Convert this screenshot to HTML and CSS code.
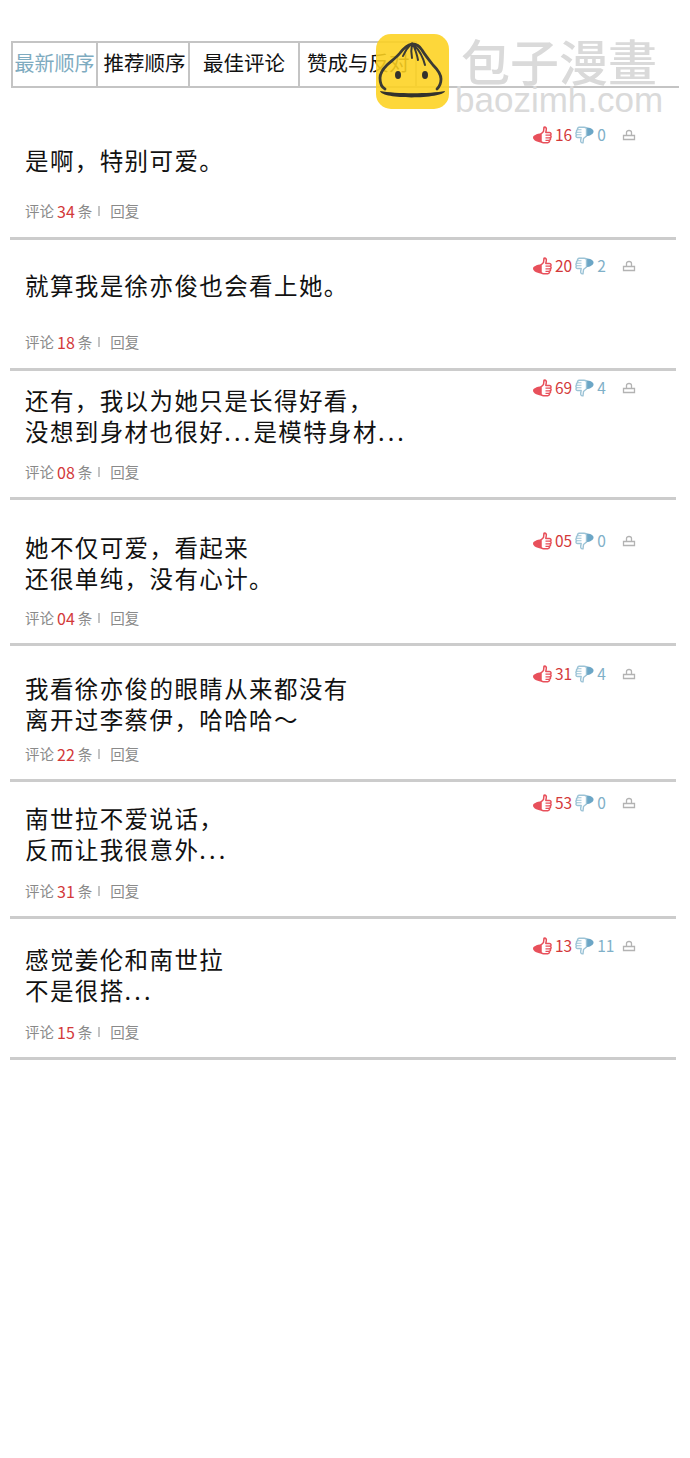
FILE: index.html
```html
<!DOCTYPE html>
<html lang="zh">
<head>
<meta charset="utf-8">
<title>评论</title>
<link rel="stylesheet" href="styles.css">
</head>
<body>
<svg class="defs" width="0" height="0" aria-hidden="true">
  <symbol id="up" viewBox="0 0 20 18">
    <path d="M0 11.500C0 9.500 3 8 9 7V16.500C4 16.500 0 14 0 11.500Z" fill="#e8505b"/>
    <path d="M8 8 10.500 5.500 11 1.200c1.800-.4 2.800 1 2.200 3L12.800 6.500h3.700c1.800 0 2 2.200.8 2.700 1.200.7 1 2.300-.1 2.600.8.900.3 2.300-.8 2.500.4 1.100-.3 2.400-1.600 2.400H10.500C9 16.700 8 16 8 15Z" fill="#fff" stroke="#e8505b" stroke-width="1.500" stroke-linejoin="round"/>
    <path d="M12.500 9.200h4.500M12.500 11.800h4.500M12.500 14.300h3.500" fill="none" stroke="#e8505b" stroke-width="1.300"/>
  </symbol>
  <symbol id="down" viewBox="0 0 20 18">
    <path d="M19.500 5.500C19.500 8 16.500 9.500 12 10.500V1.500C16 1.500 19.500 3 19.500 5.500Z" fill="#6ca6c6"/>
    <path d="M12.500 10 9.500 12.500 9 16.800c-1.800.4-2.800-1-2.200-3L7.200 11.500H3.500c-1.800 0-2-2.200-.8-2.700-1.200-.7-1-2.300.1-2.600-.8-.9-.3-2.300.8-2.500-.4-1.100.3-2.400 1.600-2.400H10c1.500 0 2.500.7 2.500 1.700Z" fill="#fff" stroke="#9cc3d6" stroke-width="1.400" stroke-linejoin="round"/>
    <path d="M7.500 8.800H3M7.500 6.200H3M7.500 3.700H4" fill="none" stroke="#9cc3d6" stroke-width="1.100"/>
  </symbol>
  <symbol id="report" viewBox="0 0 14 12">
    <path d="M4.500 6V3.500C4.500 2 5.500 1.500 7 1.500S9.500 2 9.500 3.500V6M1.500 6.500H12.500V10.500H1.500Z" fill="none" stroke="#b3b3b3" stroke-width="1.300"/>
  </symbol>
</svg>

<nav class="tabs">
  <a class="tab tab-new">最新顺序</a>
  <a class="tab tab-rec">推荐顺序</a>
  <a class="tab tab-best">最佳评论</a>
  <a class="tab tab-vote">赞成与反对</a>
</nav>

<div class="brand">
  <svg class="logo" viewBox="0 0 73 75" aria-hidden="true">
    <rect width="73" height="75" rx="15" fill="#fdd21f" fill-opacity=".88"/>
    <path d="M36 10C31 11 27 15 24 19 20 24 15 27 11 31 7 35 4 40 4 44 4 49 5 53 9 55" fill="none" stroke="#3b3a34" stroke-width="2.800" stroke-linecap="round"/>
    <path d="M36 10C41 10 43 12 46 16 49 21 53 26 57 31 62 36 65 40 65 45 65 49 64 52 61 55" fill="none" stroke="#3b3a34" stroke-width="2.800" stroke-linecap="round"/>
    <path d="M35 10C32 13 29 17 27 22M36 10C35 15 35 19 36 24M37 10C39 15 41 20 42 26M38 11C43 16 47 23 49 31" fill="none" stroke="#3b3a34" stroke-width="2" stroke-linecap="round"/>
    <ellipse cx="22" cy="41" rx="3" ry="4" fill="#33322c"/>
    <ellipse cx="49" cy="41" rx="3" ry="4" fill="#33322c"/>
    <path d="M4 57C20 60 54 60 69 57 68 65 6 66 4 57Z" fill="#33322c"/>
  </svg>
  <div class="brand-text">
    <div class="brand-name">包子漫畫</div>
    <div class="brand-url">baozimh.com</div>
  </div>
</div>

<main class="list">
  <article class="item item-1">
    <div class="body">
      <p class="text">是啊，特别可爱。</p>
      <p class="meta">评论 <b>34</b> 条<i class="sep"></i>回复</p>
    </div>
    <div class="votes">
      <svg class="ic"><use href="#up"/></svg><span class="n-up">16</span>
      <svg class="ic"><use href="#down"/></svg><span class="n-down">0</span>
      <svg class="ic-r"><use href="#report"/></svg>
    </div>
  </article>
  <article class="item item-2">
    <div class="body">
      <p class="text">就算我是徐亦俊也会看上她。</p>
      <p class="meta">评论 <b>18</b> 条<i class="sep"></i>回复</p>
    </div>
    <div class="votes">
      <svg class="ic"><use href="#up"/></svg><span class="n-up">20</span>
      <svg class="ic"><use href="#down"/></svg><span class="n-down">2</span>
      <svg class="ic-r"><use href="#report"/></svg>
    </div>
  </article>
  <article class="item item-3">
    <div class="body">
      <p class="text">还有，我以为她只是长得好看，<br>没想到身材也很好<span class="dots">...</span>是模特身材<span class="dots">...</span></p>
      <p class="meta">评论 <b>08</b> 条<i class="sep"></i>回复</p>
    </div>
    <div class="votes">
      <svg class="ic"><use href="#up"/></svg><span class="n-up">69</span>
      <svg class="ic"><use href="#down"/></svg><span class="n-down">4</span>
      <svg class="ic-r"><use href="#report"/></svg>
    </div>
  </article>
  <article class="item item-4">
    <div class="body">
      <p class="text">她不仅可爱，看起来<br>还很单纯，没有心计。</p>
      <p class="meta">评论 <b>04</b> 条<i class="sep"></i>回复</p>
    </div>
    <div class="votes">
      <svg class="ic"><use href="#up"/></svg><span class="n-up">05</span>
      <svg class="ic"><use href="#down"/></svg><span class="n-down">0</span>
      <svg class="ic-r"><use href="#report"/></svg>
    </div>
  </article>
  <article class="item item-5">
    <div class="body">
      <p class="text">我看徐亦俊的眼睛从来都没有<br>离开过李蔡伊，哈哈哈～</p>
      <p class="meta">评论 <b>22</b> 条<i class="sep"></i>回复</p>
    </div>
    <div class="votes">
      <svg class="ic"><use href="#up"/></svg><span class="n-up">31</span>
      <svg class="ic"><use href="#down"/></svg><span class="n-down">4</span>
      <svg class="ic-r"><use href="#report"/></svg>
    </div>
  </article>
  <article class="item item-6">
    <div class="body">
      <p class="text">南世拉不爱说话，<br>反而让我很意外<span class="dots">...</span></p>
      <p class="meta">评论 <b>31</b> 条<i class="sep"></i>回复</p>
    </div>
    <div class="votes">
      <svg class="ic"><use href="#up"/></svg><span class="n-up">53</span>
      <svg class="ic"><use href="#down"/></svg><span class="n-down">0</span>
      <svg class="ic-r"><use href="#report"/></svg>
    </div>
  </article>
  <article class="item item-7">
    <div class="body">
      <p class="text">感觉姜伦和南世拉<br>不是很搭<span class="dots">...</span></p>
      <p class="meta">评论 <b>15</b> 条<i class="sep"></i>回复</p>
    </div>
    <div class="votes">
      <svg class="ic"><use href="#up"/></svg><span class="n-up">13</span>
      <svg class="ic"><use href="#down"/></svg><span class="n-down">11</span>
      <svg class="ic-r"><use href="#report"/></svg>
    </div>
  </article>
</main>
</body>
</html>
```
FILE: styles.css
```css
* { box-sizing: border-box; }
html, body { margin: 0; padding: 0; background: #fff; }
body {
  width: 690px;
  height: 1458px;
  overflow: hidden;
  position: relative;
  padding-top: 41px;
  font-family: "Noto Sans CJK SC", "Noto Sans", sans-serif;
}
.defs { position: absolute; }

.tabs {
  display: flex;
  height: 47px;
  margin-left: 11px;
  width: 668px;
  border-bottom: 2px solid #c4c4c4;
}
.tab {
  display: flex;
  align-items: center;
  justify-content: center;
  height: 45px;
  padding-bottom: 4px;
  font-size: 20.5px;
  line-height: 1;
  color: #111;
  white-space: nowrap;
  border-top: 2px solid #c4c4c4;
  border-left: 2px solid #c4c4c4;
}
.tab-new { width: 85px; font-size: 20px; color: #7eabc0; }
.tab-rec { width: 92px; padding-left: 3px; }
.tab-best { width: 110px; }
.tab-vote { width: 119px; justify-content: flex-start; padding-left: 7px; border-right: 2px solid #c4c4c4; }

.brand {
  position: absolute;
  top: 34px;
  left: 376px;
  display: flex;
  gap: 6px;
}
.logo { width: 73px; height: 75px; display: block; }
.brand-text { display: flex; flex-direction: column; align-items: center; color: #dadada; }
.brand-name { font-size: 49px; line-height: 52px; font-weight: 500; white-space: nowrap; }
.brand-url { font-family: "Liberation Sans", sans-serif; font-size: 35px; line-height: 28px; white-space: nowrap; }

.list { margin: 0 14px 0 10px; }
.item {
  display: grid;
  grid-template-columns: 1fr auto;
  border-bottom: 3px solid #cccccc;
}
.body { padding-left: 15px; }
.text {
  margin: 0;
  font-size: 23.5px;
  line-height: 31px;
  letter-spacing: 1.4px;
  color: #111;
  white-space: nowrap;
}
.dots { letter-spacing: 3.2px; }
.meta {
  margin: 0;
  font-size: 14.5px;
  line-height: 20px;
  color: #8a8a8a;
  display: flex;
  align-items: center;
  gap: 3px;
}
.meta b { font-weight: 400; color: #d3393a; font-size: 16px; }
.sep { width: 2px; height: 10px; background: #c4c4c4; margin: 0 7px 0 3px; }

.votes {
  display: flex;
  align-items: center;
  height: 20px;
  margin-right: 40px;
  font-size: 15.5px;
  line-height: 20px;
  width: 103px;
}
.ic { width: 20px; height: 18px; flex: none; }
.ic-r { width: 14px; height: 12px; flex: none; margin-left: auto; }
.n-up { color: #d3393a; margin: 0 2px 2px; }
.n-down { color: #7fb0c8; margin: 0 0 2px 3px; }

.item-1 { height: 152px; }
.item-1 .body { padding-top: 57px; } .item-1 .meta { margin-top: 25px; } .item-1 .votes { margin-top: 37px; }
.item-2 { height: 131px; }
.item-2 .body { padding-top: 30px; } .item-2 .meta { margin-top: 31px; } .item-2 .votes { margin-top: 16px; }
.item-3 { height: 129px; }
.item-3 .body { padding-top: 14px; } .item-3 .meta { margin-top: 15px; } .item-3 .votes { margin-top: 7px; }
.item-4 { height: 146px; }
.item-4 .body { padding-top: 32px; } .item-4 .meta { margin-top: 14px; } .item-4 .votes { margin-top: 31px; }
.item-5 { height: 136px; }
.item-5 .body { padding-top: 27px; } .item-5 .meta { margin-top: 9px; } .item-5 .votes { margin-top: 18px; }
.item-6 { height: 137px; }
.item-6 .body { padding-top: 21px; } .item-6 .meta { margin-top: 16px; } .item-6 .votes { margin-top: 11px; }
.item-7 { height: 141px; }
.item-7 .body { padding-top: 25px; } .item-7 .meta { margin-top: 16px; } .item-7 .votes { margin-top: 17px; }
```
